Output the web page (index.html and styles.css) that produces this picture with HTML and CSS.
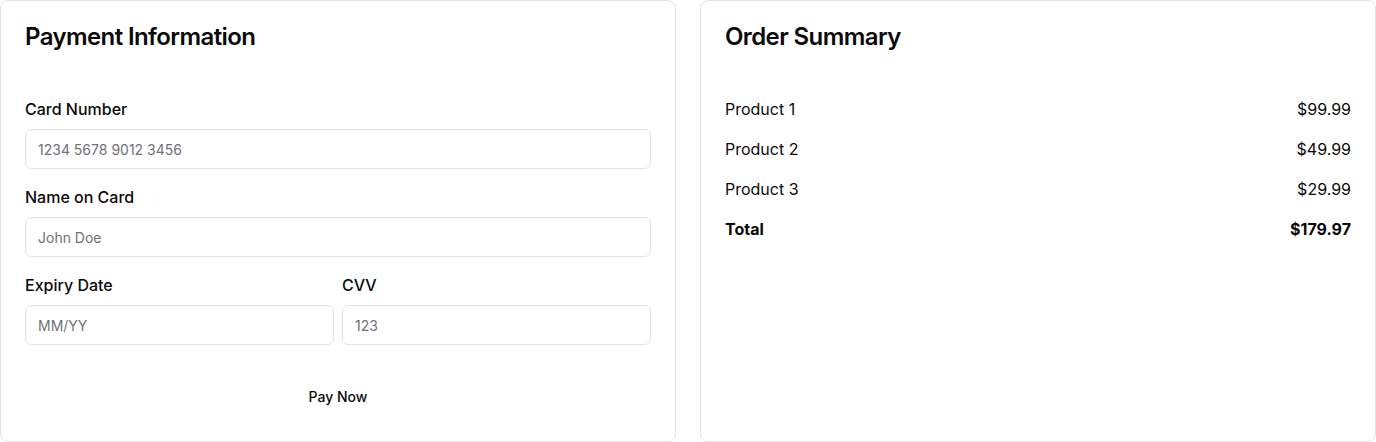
FILE: index.html
```html
<!DOCTYPE html>
<html>
<head>
<meta charset="utf-8">
<link rel="stylesheet" href="styles.css">
</head>
<body>
<div class="grid">
  <div class="card">
    <div class="card-header"><h2 class="card-title">Payment Information</h2></div>
    <div class="card-content">
      <form class="form">
        <div class="field">
          <label class="label">Card Number</label>
          <input class="input" placeholder="1234 5678 9012 3456">
        </div>
        <div class="field">
          <label class="label">Name on Card</label>
          <input class="input" placeholder="John Doe">
        </div>
        <div class="two">
          <div class="field">
            <label class="label">Expiry Date</label>
            <input class="input" placeholder="MM/YY">
          </div>
          <div class="field">
            <label class="label">CVV</label>
            <input class="input" placeholder="123">
          </div>
        </div>
        <button type="button" class="button">Pay Now</button>
      </form>
    </div>
  </div>
  <div class="card">
    <div class="card-header"><h2 class="card-title">Order Summary</h2></div>
    <div class="card-content">
      <div class="rows">
        <div class="row"><span>Product 1</span><span>$99.99</span></div>
        <div class="row"><span>Product 2</span><span>$49.99</span></div>
        <div class="row"><span>Product 3</span><span>$29.99</span></div>
        <div class="row total"><span>Total</span><span>$179.97</span></div>
      </div>
    </div>
  </div>
</div>
</body>
</html>
```
FILE: styles.css
```css
* { box-sizing: border-box; }
html, body { margin: 0; padding: 0; background: #fff; }
body { font-family: Inter, "Noto Sans", sans-serif; color: #0a0a0a; }
.grid {
  display: grid;
  grid-template-columns: 1fr 1fr;
  gap: 24px;
}
.card {
  border: 1px solid #e4e4e7;
  border-radius: 8px;
  background: #fff;
  min-height: 442px;
}
.card-header { padding: 24px; }
.card-title {
  margin: 0;
  font-size: 24px;
  line-height: 24px;
  font-weight: 600;
  letter-spacing: -0.6px;
}
.card-content { padding: 0 24px 24px; }
.form { margin: 24px 0 0; display: flex; flex-direction: column; gap: 16px; }
.field { display: flex; flex-direction: column; gap: 8px; }
.label { font-size: 16px; line-height: 24px; font-weight: 500; }
.input {
  height: 40px;
  border: 1px solid #e4e4e7;
  border-radius: 6px;
  padding: 0 12px;
  font-family: inherit;
  font-size: 14px;
  color: #0a0a0a;
  background: #fff;
  outline: none;
}
.input::placeholder { color: #71717a; }
.two { display: grid; grid-template-columns: 1fr 1fr; gap: 8px; }
.button {
  margin-top: 15px;
  height: 40px;
  border: none;
  background: transparent;
  font-family: inherit;
  font-size: 14px;
  font-weight: 500;
  color: #0a0a0a;
}
.rows { margin-top: 24px; display: flex; flex-direction: column; gap: 16px; }
.row { display: flex; justify-content: space-between; font-size: 16px; line-height: 24px; }
.total { font-weight: 700; }
```
